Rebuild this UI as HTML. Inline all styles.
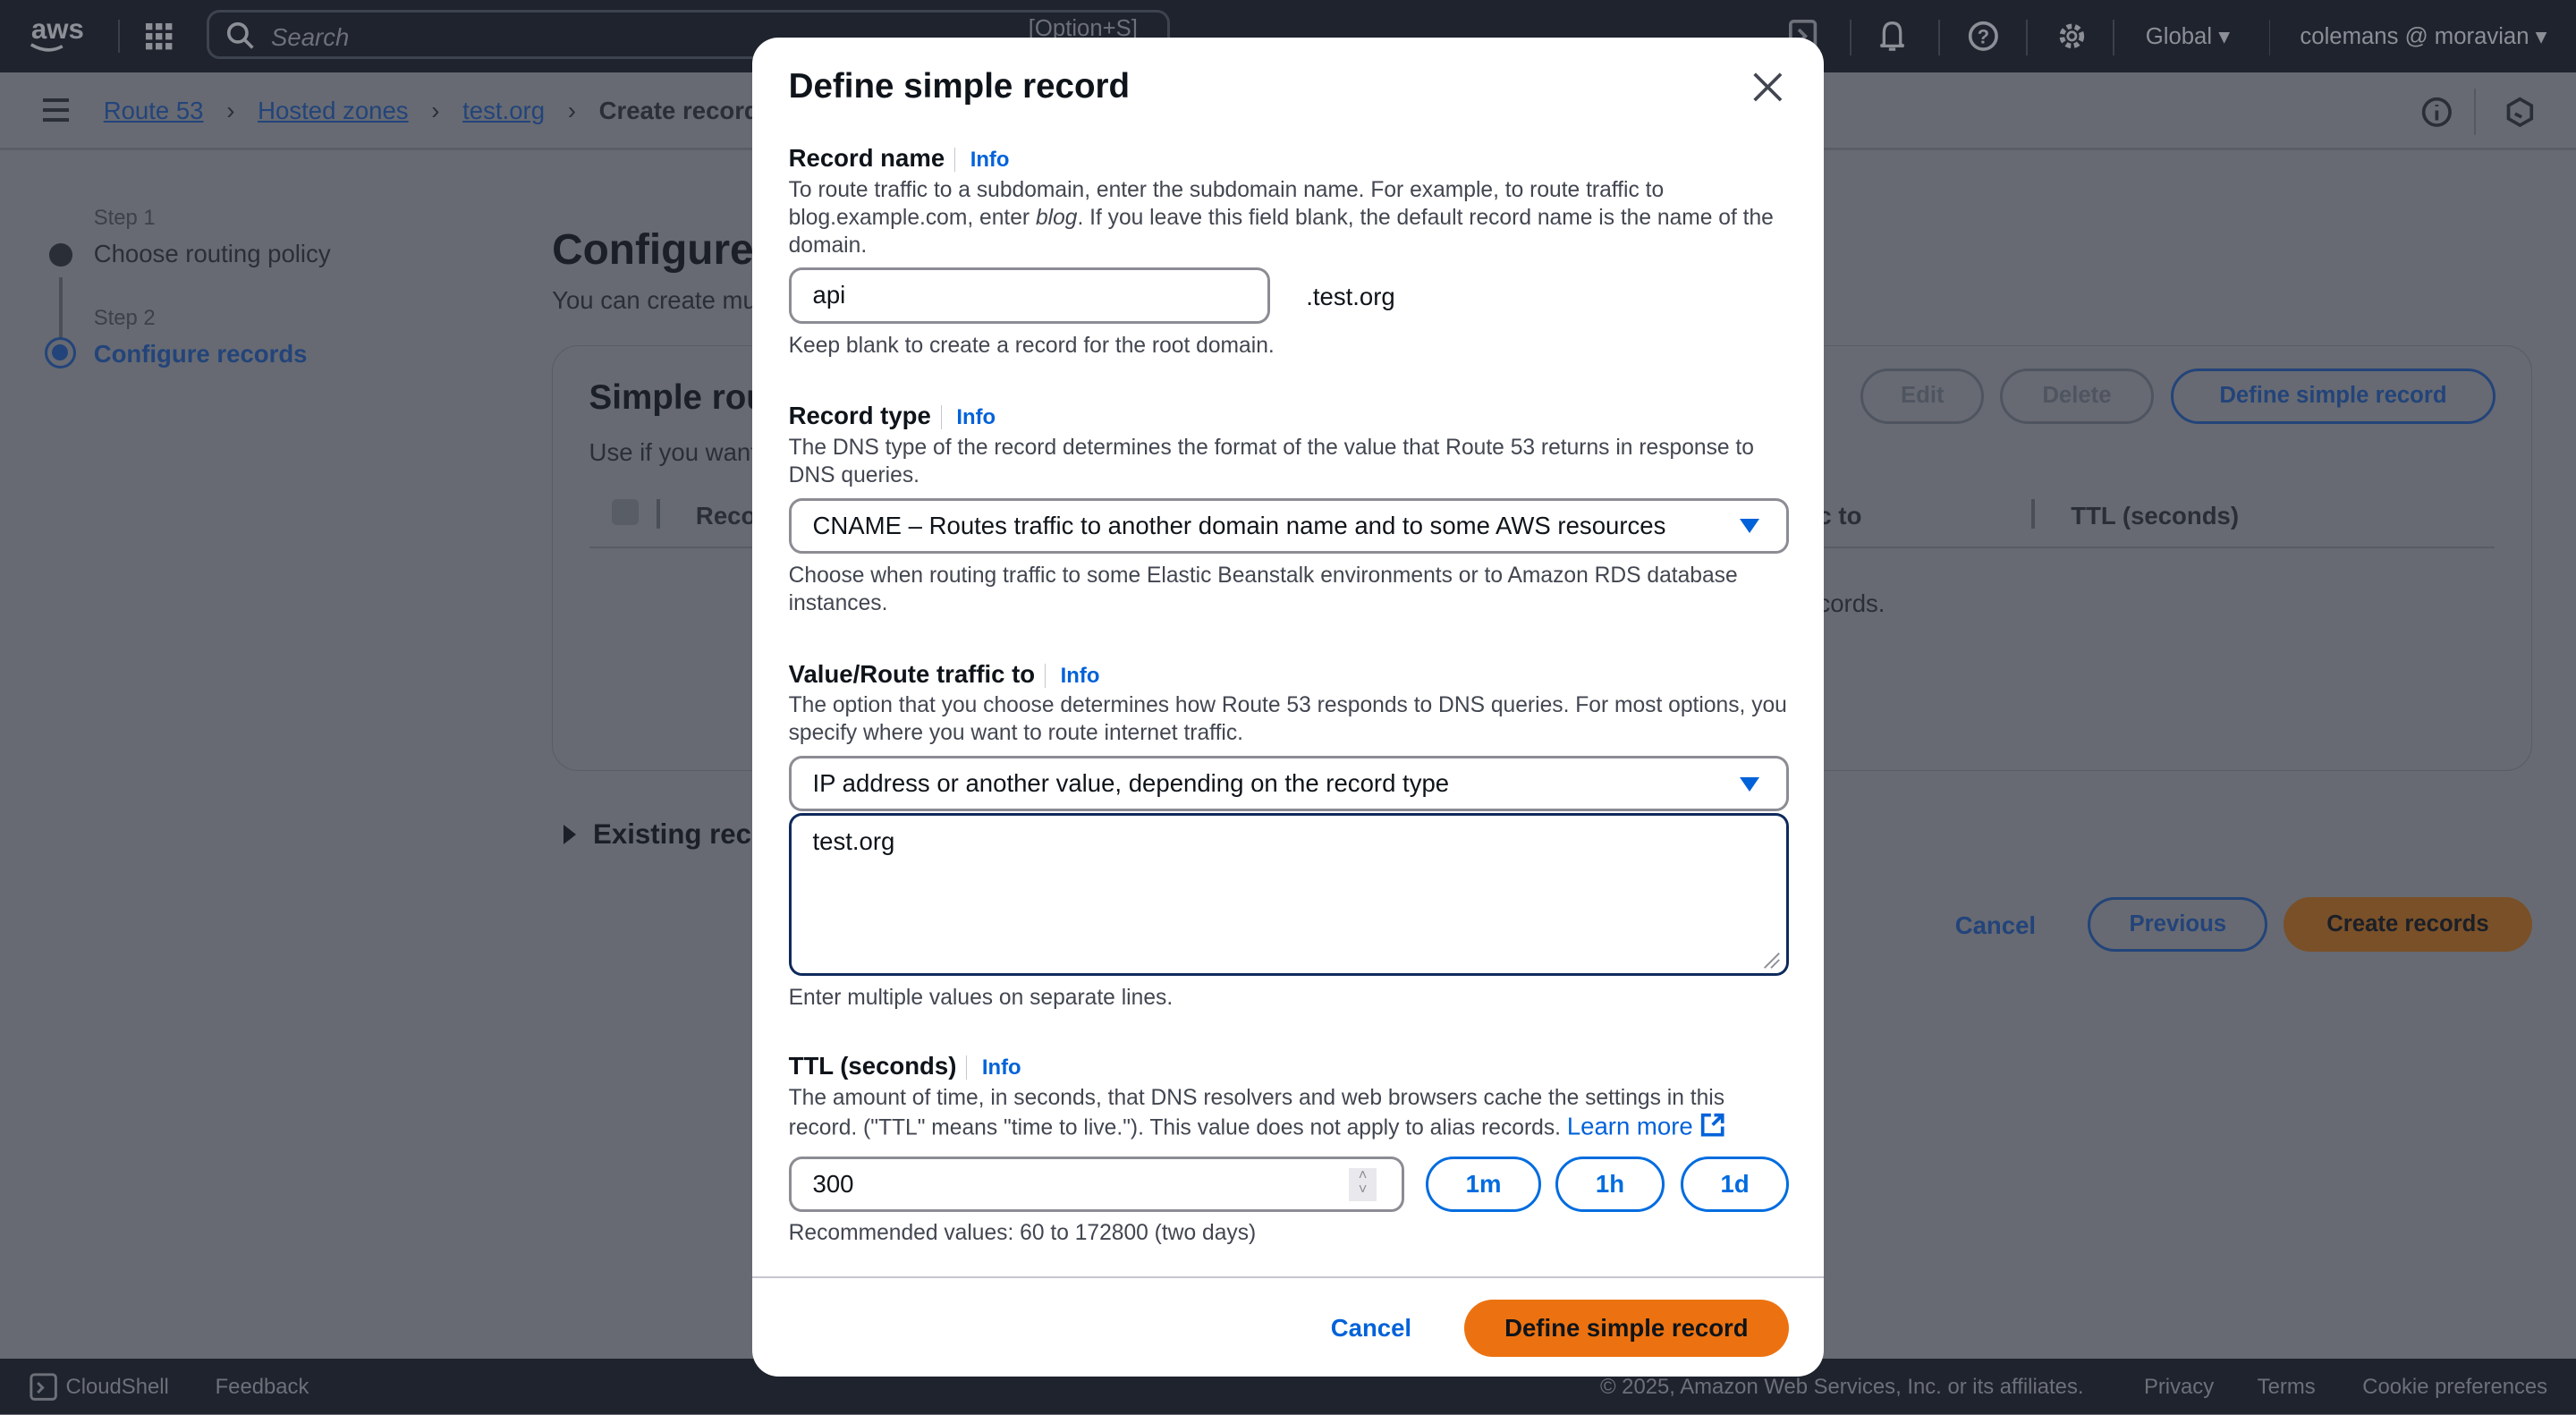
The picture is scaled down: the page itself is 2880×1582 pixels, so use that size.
<!DOCTYPE html>
<html><head><meta charset="utf-8"><style>
html,body{margin:0;padding:0;}
body{width:1568px;height:861px;zoom:1.836735;overflow:hidden;position:relative;background:#676a72;font-family:"Liberation Sans",sans-serif;color:#1b1f27;}
.a{position:absolute;white-space:nowrap;}
.top{position:absolute;left:0;top:0;width:1568px;height:44px;background:#1e232d;}
.bc{position:absolute;left:0;top:44px;width:1568px;height:46px;border-bottom:2px solid #5a5e66;}
.foot{position:absolute;left:0;top:827px;width:1568px;height:34px;background:#1e232d;color:#6d7079;font-size:13px;}
.lnk{color:#23447a;text-decoration:underline;}
.dk{color:#2a2e36;}
.panel{position:absolute;left:336px;top:210px;width:1204px;height:258px;border:1px solid #585c65;border-radius:16px;}
.pbtn{position:absolute;height:30px;border:2px solid #4f5560;border-radius:18px;color:#4f5560;font-weight:bold;font-size:14px;text-align:center;line-height:30px;}
.modal{position:absolute;left:458px;top:23px;width:652px;height:815px;background:#fff;border-radius:16px;}
.m{position:absolute;white-space:nowrap;}
.lbl{font-weight:bold;font-size:15px;color:#0f141a;}
.info{color:#0262d9;font-weight:bold;font-size:13px;border-left:1px solid #c6c6cd;padding-left:9px;margin-left:6px;}
.desc{font-size:13.4px;color:#424650;line-height:17px;white-space:normal;width:612px;}
.sm{font-size:13.4px;color:#424650;}
.inp{position:absolute;border:2px solid #8c8c94;border-radius:8px;box-sizing:border-box;font-size:15px;color:#0f141a;padding-left:13px;}
.tb{position:absolute;border:2px solid #006ce0;border-radius:18px;box-sizing:border-box;color:#006ce0;font-weight:bold;font-size:15px;text-align:center;line-height:30px;height:34px;top:681px;}
.tri{position:absolute;width:0;height:0;border-left:6px solid transparent;border-right:6px solid transparent;border-top:9px solid #0262d9;}
</style></head><body>
<div class="top">
 <div class="a" style="left:19px;top:8px;color:#8c8f96;font-size:17px;font-weight:bold;">aws</div>
 <svg class="a" style="left:18px;top:26px" width="22" height="8"><path d="M1 1 Q11 7 20 2" stroke="#8c8f96" stroke-width="2" fill="none"/></svg>
 <div class="a" style="left:72px;top:12px;width:1px;height:20px;background:#3a3f49"></div>
 <svg class="a" style="left:89px;top:14px" width="18" height="18" fill="#8c8f96"><rect x="0" y="0" width="4" height="4"/><rect x="6" y="0" width="4" height="4"/><rect x="12" y="0" width="4" height="4"/><rect x="0" y="6" width="4" height="4"/><rect x="6" y="6" width="4" height="4"/><rect x="12" y="6" width="4" height="4"/><rect x="0" y="12" width="4" height="4"/><rect x="6" y="12" width="4" height="4"/><rect x="12" y="12" width="4" height="4"/></svg>
 <div class="a" style="left:126px;top:6px;width:586px;height:30px;border:2px solid #3d434f;border-radius:8px;box-sizing:border-box"></div>
 <svg class="a" style="left:138px;top:13px" width="18" height="18"><circle cx="7" cy="7" r="5.5" stroke="#8c8f96" stroke-width="2" fill="none"/><path d="M11 11 L16 16" stroke="#8c8f96" stroke-width="2"/></svg>
 <div class="a" style="left:165px;top:14px;color:#6d7079;font-size:15px;font-style:italic">Search</div>
 <div class="a" style="left:626px;top:10px;color:#6d7079;font-size:14px">[Option+S]</div>
 <svg class="a" style="left:1089px;top:12px" width="18" height="20"><rect x="1" y="1" width="15" height="17" rx="2" stroke="#6d7079" stroke-width="2" fill="none"/><path d="M6 6 L10 10 L6 14" stroke="#6d7079" stroke-width="2" fill="none"/></svg>
 <div class="a" style="left:1126px;top:12px;width:1px;height:22px;background:#3a3f49"></div>
 <svg class="a" style="left:1143px;top:12px" width="18" height="20"><path d="M4 15 L4 8 Q4 2 9 2 Q14 2 14 8 L14 15 L16 16 L2 16 Z M7 18 L11 18" stroke="#8c8f96" stroke-width="1.8" fill="none"/></svg>
 <div class="a" style="left:1180px;top:12px;width:1px;height:22px;background:#3a3f49"></div>
 <svg class="a" style="left:1197px;top:12px" width="20" height="20"><circle cx="10" cy="10" r="8" stroke="#8c8f96" stroke-width="2" fill="none"/><text x="10" y="14.5" text-anchor="middle" font-size="12" font-weight="bold" fill="#8c8f96" font-family="Liberation Sans">?</text></svg>
 <div class="a" style="left:1233px;top:12px;width:1px;height:22px;background:#3a3f49"></div>
 <svg class="a" style="left:1251px;top:12px" width="20" height="20"><circle cx="10" cy="10" r="6" stroke="#8c8f96" stroke-width="3" fill="none" stroke-dasharray="3 2"/><circle cx="10" cy="10" r="2.5" stroke="#8c8f96" stroke-width="1.5" fill="none"/></svg>
 <div class="a" style="left:1286px;top:12px;width:1px;height:22px;background:#3a3f49"></div>
 <div class="a" style="left:1306px;top:14px;color:#8c8f96;font-size:14px">Global ▾</div>
 <div class="a" style="left:1381px;top:12px;width:1px;height:22px;background:#3a3f49"></div>
 <div class="a" style="left:1400px;top:14px;color:#8c8f96;font-size:14px">colemans @ moravian ▾</div>
</div>
<div class="bc">
 <div class="a" style="left:26px;top:16px;width:16px;height:2px;background:#2a2e36;box-shadow:0 6px 0 #2a2e36,0 12px 0 #2a2e36"></div>
 <div class="a" style="left:63px;top:15px;font-size:15px"><span class="lnk">Route 53</span><span class="dk" style="margin:0 14px">›</span><span class="lnk">Hosted zones</span><span class="dk" style="margin:0 14px">›</span><span class="lnk">test.org</span><span class="dk" style="margin:0 14px">›</span><span class="dk" style="font-weight:bold">Create records</span></div>
 <svg class="a" style="left:1473px;top:14px" width="20" height="20"><circle cx="10" cy="10" r="8" stroke="#2a2e36" stroke-width="2" fill="none"/><path d="M10 9 V15 M10 5.5 V6.5" stroke="#2a2e36" stroke-width="2"/></svg>
 <div class="a" style="left:1506px;top:10px;width:1px;height:28px;background:#555962"></div>
 <svg class="a" style="left:1524px;top:14px" width="20" height="20"><path d="M10 2 L17 6 L17 14 L10 18 L3 14 L3 6 Z" stroke="#2a2e36" stroke-width="2" fill="none"/><path d="M7 11 L11 13" stroke="#2a2e36" stroke-width="2"/></svg>
</div>
<div class="a" style="left:57px;top:125px;font-size:13px;color:#3c4048">Step 1</div>
<div class="a" style="left:30px;top:148px;width:14px;height:14px;border-radius:50%;background:#2a2e36"></div>
<div class="a" style="left:57px;top:146px;font-size:15px;color:#2a2e36">Choose routing policy</div>
<div class="a" style="left:36px;top:169px;width:2px;height:38px;background:#4a4e57"></div>
<div class="a" style="left:57px;top:186px;font-size:13px;color:#3c4048">Step 2</div>
<div class="a" style="left:27px;top:205px;width:16px;height:16px;border-radius:50%;border:2px solid #23447a;box-sizing:content-box"><div style="margin:3px;width:10px;height:10px;border-radius:50%;background:#23447a"></div></div>
<div class="a" style="left:57px;top:207px;font-size:15px;color:#23447a;font-weight:bold">Configure records</div>
<div class="a" style="left:336px;top:137px;font-size:26px;font-weight:bold;color:#1b1f27">Configure records</div>
<div class="a" style="left:336px;top:174px;font-size:15px;color:#2a2e36">You can create multiple records</div>
<div class="panel">
 <div class="a" style="left:22px;top:20px;font-size:21px;font-weight:bold">Simple routing records</div>
 <div class="a" style="left:22px;top:56px;font-size:15px;color:#2a2e36">Use if you want to route traffic</div>
 <div class="a" style="left:36px;top:93px;width:16px;height:16px;border-radius:3px;background:#595d66"></div>
 <div class="a" style="left:63px;top:93px;width:2px;height:18px;background:#4a4e57"></div>
 <div class="a" style="left:87px;top:95px;font-size:15px;font-weight:bold;color:#2a2e36">Record name</div>
 <div class="a" style="left:770px;top:95px;font-size:15px;font-weight:bold;color:#2a2e36">c to</div>
 <div class="a" style="left:900px;top:93px;width:2px;height:18px;background:#4a4e57"></div>
 <div class="a" style="left:924px;top:95px;font-size:15px;font-weight:bold;color:#2a2e36">TTL (seconds)</div>
 <div class="a" style="left:22px;top:122px;width:1160px;height:1px;background:#585c65"></div>
 <div class="a" style="left:770px;top:148px;font-size:15px;color:#2a2e36">cords.</div>
 <div class="pbtn" style="left:796px;top:14px;width:72px">Edit</div>
 <div class="pbtn" style="left:881px;top:14px;width:90px">Delete</div>
 <div class="pbtn" style="left:985px;top:14px;width:194px;border-color:#23447a;color:#23447a">Define simple record</div>
</div>
<div class="a" style="left:343px;top:502px;width:0;height:0;border-top:6px solid transparent;border-bottom:6px solid transparent;border-left:8px solid #1b1f27"></div>
<div class="a" style="left:361px;top:498px;font-size:17px;font-weight:bold">Existing records</div>
<div class="a" style="left:1190px;top:555px;font-size:15px;font-weight:bold;color:#23447a">Cancel</div>
<div class="pbtn" style="left:1271px;top:546px;width:106px;border-color:#23447a;color:#23447a">Previous</div>
<div class="pbtn" style="left:1390px;top:546px;width:148px;border-color:#7a5028;background:#7a5028;color:#1b1f27">Create records</div>
<div class="foot">
 <svg class="a" style="left:18px;top:9px" width="17" height="17"><rect x="1" y="1" width="15" height="15" rx="2" stroke="#6d7079" stroke-width="1.6" fill="none"/><path d="M5 6 L8 9 L5 12" stroke="#6d7079" stroke-width="1.6" fill="none"/></svg>
 <div class="a" style="left:40px;top:10px">CloudShell</div>
 <div class="a" style="left:131px;top:10px">Feedback</div>
 <div class="a" style="left:974px;top:10px">© 2025, Amazon Web Services, Inc. or its affiliates.</div>
 <div class="a" style="left:1305px;top:10px">Privacy</div>
 <div class="a" style="left:1374px;top:10px">Terms</div>
 <div class="a" style="left:1438px;top:10px">Cookie preferences</div>
</div>

<div class="modal">
 <div class="m" style="left:22px;top:18px;font-size:21px;font-weight:bold;color:#0f141a">Define simple record</div>
 <svg class="m" style="left:608px;top:20px" width="20" height="20"><path d="M2 2 L18 18 M18 2 L2 18" stroke="#424650" stroke-width="2"/></svg>
 <div class="m" style="left:22px;top:64px"><span class="lbl">Record name</span><span class="info">Info</span></div>
 <div class="m desc" style="left:22px;top:84px">To route traffic to a subdomain, enter the subdomain name. For example, to route traffic to blog.example.com, enter <i>blog</i>. If you leave this field blank, the default record name is the name of the domain.</div>
 <div class="inp" style="left:22px;top:140px;width:293px;height:34px;line-height:30px">api</div>
 <div class="m" style="left:337px;top:149px;font-size:15px;color:#0f141a">.test.org</div>
 <div class="m sm" style="left:22px;top:180px">Keep blank to create a record for the root domain.</div>
 <div class="m" style="left:22px;top:221px"><span class="lbl">Record type</span><span class="info">Info</span></div>
 <div class="m desc" style="left:22px;top:241px">The DNS type of the record determines the format of the value that Route 53 returns in response to DNS queries.</div>
 <div class="inp" style="left:22px;top:280px;width:609px;height:34px;line-height:30px">CNAME – Routes traffic to another domain name and to some AWS resources</div>
 <div class="tri" style="left:601px;top:293px"></div>
 <div class="m desc" style="left:22px;top:319px">Choose when routing traffic to some Elastic Beanstalk environments or to Amazon RDS database instances.</div>
 <div class="m" style="left:22px;top:378px"><span class="lbl">Value/Route traffic to</span><span class="info">Info</span></div>
 <div class="m desc" style="left:22px;top:398px">The option that you choose determines how Route 53 responds to DNS queries. For most options, you specify where you want to route internet traffic.</div>
 <div class="inp" style="left:22px;top:437px;width:609px;height:34px;line-height:30px">IP address or another value, depending on the record type</div>
 <div class="tri" style="left:601px;top:450px"></div>
 <div class="inp" style="left:22px;top:472px;width:609px;height:99px;border-color:#0f2a5c;padding-top:7px">test.org</div>
 <svg class="m" style="left:614px;top:555px" width="12" height="12"><path d="M11 2 L2 11 M11 6 L6 11" stroke="#8c8c94" stroke-width="1"/></svg>
 <div class="m sm" style="left:22px;top:577px">Enter multiple values on separate lines.</div>
 <div class="m" style="left:22px;top:617px"><span class="lbl">TTL (seconds)</span><span class="info">Info</span></div>
 <div class="m desc" style="left:22px;top:637px">The amount of time, in seconds, that DNS resolvers and web browsers cache the settings in this record. ("TTL" means "time to live."). This value does not apply to alias records. <span style="color:#0262d9;font-size:15px">Learn more</span> <svg width="16" height="16" style="vertical-align:-2px"><path d="M7 2 H2 V14 H14 V9 M9 2 H14 V7 M14 2 L8 8" stroke="#0262d9" stroke-width="2" fill="none"/></svg></div>
 <div class="inp" style="left:22px;top:681px;width:375px;height:34px;line-height:30px">300</div>
 <div class="m" style="left:363px;top:688px;width:17px;height:20px;background:#e9e9ed;color:#8c8c94;font-size:9px;text-align:center;line-height:9px">˄<br>˅</div>
 <div class="tb" style="left:410px;width:70px">1m</div>
 <div class="tb" style="left:489px;width:66px">1h</div>
 <div class="tb" style="left:565px;width:66px">1d</div>
 <div class="m sm" style="left:22px;top:720px">Recommended values: 60 to 172800 (two days)</div>
 <div class="m" style="left:0;top:754px;width:652px;height:1px;background:#c6c6cd"></div>
 <div class="m" style="left:352px;top:777px;font-size:15px;font-weight:bold;color:#0262d9">Cancel</div>
 <div class="m" style="left:433px;top:768px;width:198px;height:35px;border-radius:18px;background:#ec7211;color:#0f141a;font-weight:bold;font-size:15px;text-align:center;line-height:35px">Define simple record</div>
</div>
</body></html>
